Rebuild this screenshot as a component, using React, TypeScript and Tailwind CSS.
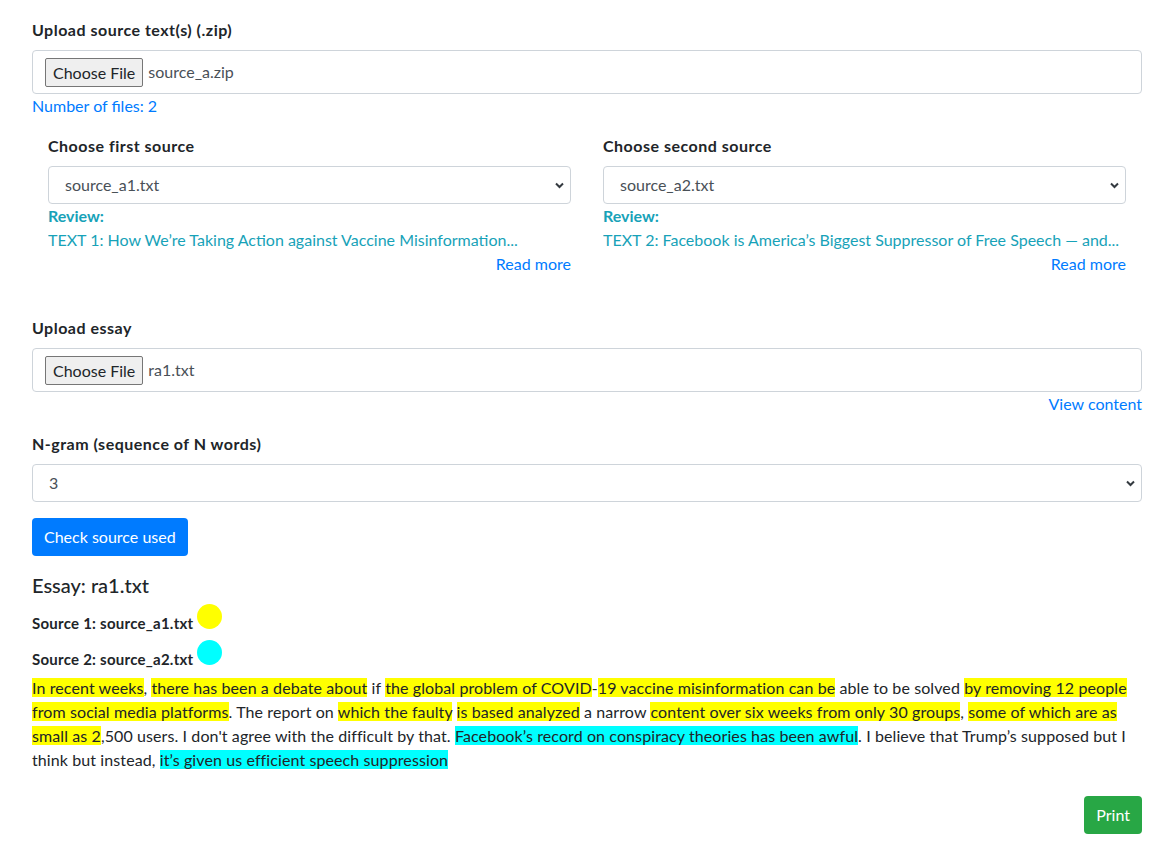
import { useState } from 'react'

const Y = 'bg-[#ffff00]'
const C = 'bg-[#00ffff]'

const essay: [string, string][] = [
  ['In recent weeks', Y],
  [', ', ''],
  ['there has been a debate about', Y],
  [' if ', ''],
  ['the global problem of COVID', Y],
  ['-', ''],
  ['19 vaccine misinformation can be', Y],
  [' able to be solved ', ''],
  ['by removing 12 people from social media platforms', Y],
  ['. The report on ', ''],
  ['which the faulty', Y],
  [' ', ''],
  ['is based analyzed', Y],
  [' a narrow ', ''],
  ['content over six weeks from only 30 groups', Y],
  [', ', ''],
  ['some of which are as small as 2', Y],
  [",500 users. I don't agree with the difficult by that. ", ''],
  ['Facebook’s record on conspiracy theories has been awful', C],
  ['. I believe that Trump’s supposed but I think but instead, ', ''],
  ['it’s given us efficient speech suppression', C],
]

function FileBox({ name }: { name: string }) {
  return (
    <div className="flex h-[44px] items-center rounded border border-[#ced4da] bg-white pl-3">
      <span className="rounded-[2px] border border-[#767676] bg-[#efefef] px-[7px] py-[2px] leading-[23px] text-[#212529]">
        Choose File
      </span>
      <span className="ml-[5px] text-[#495057]">{name}</span>
    </div>
  )
}

function Select({ value, options }: { value: string; options: string[] }) {
  const [v, setV] = useState(value)
  return (
    <div className="relative">
      <select
        value={v}
        onChange={(e) => setV(e.target.value)}
        className="h-[38px] w-full appearance-none rounded border border-[#ced4da] bg-white pl-4 pr-8 text-[#495057] outline-none"
      >
        {options.map((o) => (
          <option key={o} value={o}>
            {o}
          </option>
        ))}
      </select>
      <svg
        className="pointer-events-none absolute right-[7px] top-[16px]"
        width="9"
        height="7"
        viewBox="0 0 9 7"
      >
        <path d="M1 1.5 4.5 5 8 1.5" fill="none" stroke="#343a40" strokeWidth="2" />
      </svg>
    </div>
  )
}

function SourceCol({ label, value, options, text }: { label: string; value: string; options: string[]; text: string }) {
  return (
    <div className="min-w-0">
      <div className="mb-2 font-bold tracking-[0.5px]">{label}</div>
      <Select value={value} options={options} />
      <div className="font-bold text-[#17a2b8]">Review:</div>
      <div className="truncate text-[#17a2b8]">{text}</div>
      <div className="text-right text-[#007bff]">Read more</div>
    </div>
  )
}

export default function App() {
  return (
    <div className="min-h-screen bg-white font-['Lato',sans-serif] text-[16px] leading-6 text-[#212529]">
      <div className="ml-[32px] w-[1110px] pt-[18px] pb-[10px]">
        {/* Sources */}
        <div className="mb-2 font-bold tracking-[0.5px]">Upload source text(s) (.zip)</div>
        <FileBox name="source_a.zip" />
        <div className="text-[#007bff]">Number of files: 2</div>

        <div className="mt-4 grid grid-cols-2 gap-8 px-4">
          <SourceCol
            label="Choose first source"
            value="source_a1.txt"
            options={['source_a1.txt', 'source_a2.txt']}
            text="TEXT 1: How We’re Taking Action against Vaccine Misinformation..."
          />
          <SourceCol
            label="Choose second source"
            value="source_a2.txt"
            options={['source_a1.txt', 'source_a2.txt']}
            text="TEXT 2: Facebook is America’s Biggest Suppressor of Free Speech — and..."
          />
        </div>

        {/* Essay */}
        <div className="mt-10 mb-2 font-bold tracking-[0.5px]">Upload essay</div>
        <FileBox name="ra1.txt" />
        <div className="text-right text-[#007bff]">View content</div>

        <div className="mt-4 mb-2 font-bold tracking-[0.5px]">N-gram (sequence of N words)</div>
        <Select value="3" options={['1', '2', '3', '4', '5']} />

        <button className="mt-4 h-[38px] rounded bg-[#007bff] px-3 text-white">Check source used</button>

        {/* Result */}
        <div className="mt-[17px] text-[20px] font-medium leading-6">Essay: ra1.txt</div>
        <div className="mt-[7px] font-bold text-[15px] tracking-[0.25px]">
          Source 1: source_a1.txt <span className="inline-block h-[25px] w-[25px] rounded-full bg-[#ffff00]" />
        </div>
        <div className="mt-[5px] font-bold text-[15px] tracking-[0.25px]">
          Source 2: source_a2.txt <span className="inline-block h-[25px] w-[25px] rounded-full bg-[#00ffff]" />
        </div>
        <p className="mt-[5px] tracking-[0.1px]">
          {essay.map(([t, c], i) =>
            c ? (
              <span key={i} className={c}>
                {t}
              </span>
            ) : (
              <span key={i}>{t}</span>
            )
          )}
        </p>

        <div className="mt-6 flex justify-end">
          <button className="h-[38px] rounded bg-[#28a745] px-3 text-white">Print</button>
        </div>
      </div>
    </div>
  )
}
